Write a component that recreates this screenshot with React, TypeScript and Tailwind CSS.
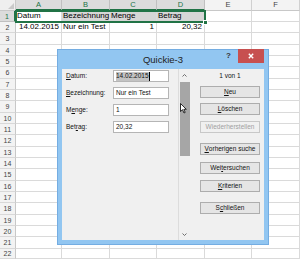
import React from "react";

const colW = ["w-[16px]", "w-[46px]", "w-[48px]", "w-[47px]", "w-[48px]", "w-[47px]", "w-[48px]"];
const letters = ["A", "B", "C", "D", "E", "F"];

function rowH(i: number) {
  if (i === 21) return "h-[10px]";
  return i % 3 === 2 ? "h-[12px]" : "h-[11px]";
}

const U = ({ children }: { children: React.ReactNode }) => (
  <span className="underline decoration-[0.5px] underline-offset-[1px]">{children}</span>
);

function Btn({ children, disabled, mt }: { children: React.ReactNode; disabled?: boolean; mt: string }) {
  return (
    <div
      className={`${mt} w-[60px] h-[12px] border border-[#adadad] bg-[#e5e5e5] flex items-center justify-center text-[6.5px] leading-none ${
        disabled ? "text-[#a0a0a0] border-[#c8c8c8] bg-[#f0f0f0]" : "text-[#111]"
      }`}
    >
      {children}
    </div>
  );
}

function Field({ label, value, selected }: { label: React.ReactNode; value: string; selected?: boolean }) {
  return (
    <div className="flex items-center h-[12px]">
      <div className="w-[47px] text-[6.5px] leading-none text-[#111]">{label}</div>
      <div className="w-[56px] h-[12px] border border-[#b5b5b5] bg-white flex items-center pl-[2px] text-[6.5px] leading-none text-[#111]">
        {selected ? (
          <>
            <span className="bg-[#c3c3c3] h-[9px] flex items-center">{value}</span>
            <span className="w-[1px] h-[9px] bg-black" />
          </>
        ) : (
          <span>{value}</span>
        )}
      </div>
    </div>
  );
}

export default function App() {
  const rows = Array.from({ length: 22 }, (_, i) => i + 1);
  return (
    <div
      className="relative w-[300px] h-[259px] overflow-hidden bg-white"
      style={{ fontFamily: '"Liberation Sans", Arial, sans-serif' }}
    >
      {/* header row */}
      <div className="flex h-[11px]">
        <div className={`${colW[0]} h-full bg-[#efefef] border-r border-b border-[#c8c8c8] relative`}>
          <div className="absolute right-[1px] bottom-[1px] w-0 h-0 border-l-[6px] border-l-transparent border-b-[6px] border-b-[#c9c9c9]" />
        </div>
        {letters.map((l, i) => {
          const sel = i < 4;
          return (
            <div
              key={l}
              className={`${colW[i + 1]} h-full flex items-center justify-center text-[7.5px] leading-none border-r ${
                sel
                  ? "bg-[#dcdcdc] text-[#217346] border-[#c0c0c0] border-b-2 border-b-[#217346]"
                  : "bg-[#f3f3f3] text-[#444] border-[#d0d0d0] border-b border-b-[#c8c8c8]"
              }`}
            >
              {l}
            </div>
          );
        })}
      </div>
      {rows.map((r, ri) => (
        <div key={r} className={`flex ${rowH(ri)}`}>
          <div
            className={`${colW[0]} h-full flex items-center justify-center text-[7px] leading-none border-b ${
              r === 1
                ? "bg-[#dcdcdc] text-[#217346] border-[#c0c0c0] border-r-2 border-r-[#217346]"
                : "bg-[#f3f3f3] text-[#444] border-[#d8d8d8] border-r border-r-[#c8c8c8]"
            }`}
          >
            {r}
          </div>
          {letters.map((l, ci) => {
            let content: React.ReactNode = null;
            let align = "justify-start pl-[1px]";
            let bg = "bg-white";
            if (r === 1) {
              content = ["Datum", "Bezeichnung", "Menge", "Betrag", "", ""][ci];
              if (ci >= 1 && ci <= 3) bg = "bg-[#d6d6d6]";
            }
            if (r === 2) {
              content = ["14.02.2015", "Nur ein Test", "1", "20,32", "", ""][ci];
              if (ci === 0 || ci === 2 || ci === 3) align = "justify-end pr-[2px]";
            }
            return (
              <div
                key={l}
                className={`${colW[ci + 1]} h-full ${bg} border-r border-b border-[#dadada] flex items-center ${align} text-[8px] leading-none text-black whitespace-nowrap overflow-visible`}
              >
                {content}
              </div>
            );
          })}
        </div>
      ))}

      {/* selection border */}
      <div className="absolute left-[15px] top-[10px] w-[191px] h-[13px] border-2 border-[#217346]" />
      <div className="absolute left-[203px] top-[20px] w-[5px] h-[5px] bg-[#217346] border border-white" />

      {/* dialog */}
      <div className="absolute left-[57px] top-[49px] w-[212px] h-[196px] bg-[#92c6f1] border border-[#74ade2] flex flex-col">
        <div className="relative h-[19px] flex items-center justify-center">
          <span className="text-[9.5px] leading-none text-[#222] mt-[1px]">Quickie-3</span>
          <span className="absolute left-[168px] top-[2px] text-[8px] font-bold text-[#333] leading-none">?</span>
          <div className="absolute right-[4px] top-[-1px] w-[26px] h-[14px] bg-[#c75050] flex items-center justify-center">
            <svg width="6" height="6" viewBox="0 0 6 6">
              <path d="M0.8 0.8 L5.2 5.2 M5.2 0.8 L0.8 5.2" stroke="white" strokeWidth="1.4" />
            </svg>
          </div>
        </div>
        <div className="mx-[4px] mb-[4px] flex-1 bg-[#f0f0f0] flex">
          {/* fields */}
          <div className="w-[116px] pl-[4px] pt-[1px] flex flex-col gap-[5px]">
            <Field label={<><U>D</U>atum:</>} value="14.02.2015" selected />
            <Field label={<><U>B</U>ezeichnung:</>} value="Nur ein Test" />
            <Field label={<>M<U>e</U>nge:</>} value="1" />
            <Field label={<>Bet<U>r</U>ag:</>} value="20,32" />
          </div>
          {/* scrollbar */}
          <div className="w-[12px] border-l border-[#dcdcdc] flex flex-col items-center">
            <div className="h-[13px] w-full flex items-center justify-center">
              <svg width="5" height="3" viewBox="0 0 5 3">
                <path d="M0.5 2.5 L2.5 0.5 L4.5 2.5" stroke="#606060" fill="none" strokeWidth="0.9" />
              </svg>
            </div>
            <div className="h-[74px] w-[10px] bg-[#a6a6a6]" />
            <div className="flex-1" />
            <div className="h-[12px] w-full flex items-center justify-center">
              <svg width="5" height="3" viewBox="0 0 5 3">
                <path d="M0.5 0.5 L2.5 2.5 L4.5 0.5" stroke="#606060" fill="none" strokeWidth="0.9" />
              </svg>
            </div>
          </div>
          {/* buttons */}
          <div className="w-[74px] pl-[10px] pt-[1px] flex flex-col">
            <div className="w-[60px] h-[12px] flex items-center justify-center text-[6.5px] leading-none text-[#111]">
              1 von 1
            </div>
            <Btn mt="mt-[4px]"><U>N</U>eu</Btn>
            <Btn mt="mt-[5px]"><U>L</U>öschen</Btn>
            <Btn mt="mt-[6px]" disabled>Wiederherstellen</Btn>
            <Btn mt="mt-[10px]"><U>V</U>orherigen suche</Btn>
            <Btn mt="mt-[7px]">Wei<U>t</U>ersuchen</Btn>
            <Btn mt="mt-[6px]"><U>K</U>riterien</Btn>
            <Btn mt="mt-[10px]">S<U>c</U>hließen</Btn>
          </div>
        </div>
      </div>

      {/* mouse cursor */}
      <svg className="absolute left-[180px] top-[103px]" width="7" height="11" viewBox="0 0 7 11">
        <path d="M0.5 0.5 L0.5 8.5 L2.5 6.7 L4 10 L5.2 9.4 L3.8 6.3 L6.3 6.3 Z" fill="white" stroke="black" strokeWidth="0.8" />
      </svg>
    </div>
  );
}
